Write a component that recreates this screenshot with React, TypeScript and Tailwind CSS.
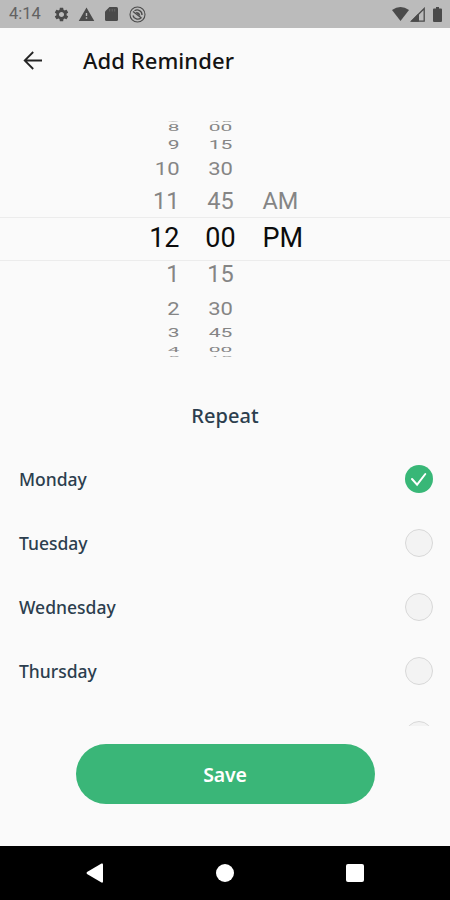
import { useState } from 'react';
import { MdSettings, MdWarning } from 'react-icons/md';

const DAYS = ['Monday', 'Tuesday', 'Wednesday', 'Thursday'];

// One entry per wheel slot, from the top edge to the bottom edge
const SLOTS = [
  { row: 'h-0', text: 'text-[21px] scale-y-[0.08] text-[#a0a0a0]' },
  { row: 'h-[14px]', text: 'text-[21px] scale-y-[0.42] text-[#858585]' },
  { row: 'h-[18px]', text: 'text-[21px] scale-y-[0.65] text-[#858585]' },
  { row: 'h-[31px]', text: 'text-[22px] scale-y-[0.86] text-[#858585]' },
  { row: 'h-9', text: 'text-[23.5px] text-[#858585]' },
  { row: 'h-[36px]', text: 'text-[27px] text-[#0c0c0c]' },
  { row: 'h-[38px]', text: 'text-[23.5px] text-[#858585]' },
  { row: 'h-[29px]', text: 'text-[22px] scale-y-[0.86] text-[#858585]' },
  { row: 'h-[19px]', text: 'text-[21px] scale-y-[0.65] text-[#858585]' },
  { row: 'h-[14px]', text: 'text-[21px] scale-y-[0.36] text-[#858585]' },
  { row: 'h-0', text: 'text-[21px] scale-y-[0.08] text-[#a0a0a0]' },
];

const HOURS = ['7', '8', '9', '10', '11', '12', '1', '2', '3', '4', '5'];
const MINUTES = ['45', '00', '15', '30', '45', '00', '15', '30', '45', '00', '15'];
const PERIODS = ['', '', '', '', 'AM', 'PM', '', '', '', '', ''];

function Wheel({ items, className }: { items: string[]; className: string }) {
  return (
    <div className={`flex flex-col font-['Roboto',sans-serif] ${className}`}>
      {items.map((item, i) => (
        <div key={i} className={`flex items-center ${SLOTS[i].row}`}>
          <span className={`block leading-none ${SLOTS[i].text}`}>{item}</span>
        </div>
      ))}
    </div>
  );
}

function StatusBar() {
  return (
    <div className="flex h-7 items-center bg-[#bbbbbb] pl-[9px] pr-2 text-[#4a4a4a]">
      <span className="w-11 pt-px font-['Roboto',sans-serif] text-[16.5px] leading-none text-[#626262]">4:14</span>
      <MdSettings className="h-[17px] w-[17px]" />
      <MdWarning className="ml-2 h-[17px] w-[17px]" />
      <svg viewBox="0 0 13 14" className="ml-[10px] h-[14px] w-[13px]" fill="currentColor">
        <path d="M4.5 0H11.5Q13 0 13 1.5V12.5Q13 14 11.5 14H1.5Q0 14 0 12.5V4.5Z" />
        <path d="M4.7 2v2.5M7.2 2v2.5M9.7 2v2.5" stroke="#666" strokeWidth="1" />
      </svg>
      <svg viewBox="0 0 17 17" className="ml-[11px] h-[17px] w-[17px]" fill="none" stroke="currentColor">
        <circle cx="8.5" cy="8.5" r="7.5" strokeWidth="1.1" />
        <path d="M4 9.5A4.8 4.8 0 0 0 12 11.8M5.5 4.8A4.8 4.8 0 0 1 13 9" strokeWidth="1.3" />
        <path d="M4 5.5L12.5 12" strokeWidth="1.3" />
        <path d="M7 6.3Q10.5 6 11 9.5L8.5 8Z" fill="currentColor" strokeWidth="0.6" />
      </svg>
      <svg viewBox="0 0 17 14" className="ml-auto h-[14px] w-[17px]" fill="currentColor">
        <path d="M0 3Q8.5-3 17 3L8.5 14Z" />
      </svg>
      <svg viewBox="0 0 15 15" className="ml-[1px] h-[15px] w-[15px]" fill="none" stroke="currentColor">
        <path d="M1.5 14.2H14.2V1.5Z" strokeWidth="1.3" />
        <path d="M1.5 14.2H8.5V7Z" fill="currentColor" strokeWidth="1" />
      </svg>
      <svg viewBox="0 0 9 15" className="ml-2 h-[15px] w-[9px]" fill="currentColor">
        <path d="M3 0H6V1.5H8Q9 1.5 9 2.5V14Q9 15 8 15H1Q0 15 0 14V2.5Q0 1.5 1 1.5H3Z" />
      </svg>
    </div>
  );
}

function DayToggle({ checked }: { checked: boolean }) {
  if (checked) {
    return (
      <span className="flex h-7 w-7 items-center justify-center rounded-full bg-[#38b777]">
        <svg viewBox="0 0 28 28" className="h-7 w-7" fill="none" stroke="white" strokeWidth="2" strokeLinecap="round">
          <path d="M7 14L12.1 19.7L20.3 9" />
        </svg>
      </span>
    );
  }
  return <span className="h-7 w-7 rounded-full border border-[#d8d8d8] bg-[#f3f3f3]" />;
}

export default function App() {
  const [selected, setSelected] = useState<string[]>(['Monday']);

  const toggleDay = (day: string) => {
    setSelected(selected.includes(day) ? selected.filter((d) => d !== day) : [...selected, day]);
  };

  return (
    <div className="flex h-[900px] w-[450px] flex-col overflow-hidden bg-[#fafafa] font-['Noto_Sans',sans-serif]">
      <StatusBar />

      <header className="flex h-[65px] items-center pl-[23px]">
        <button aria-label="Back">
          <svg viewBox="0 0 20 20" className="h-5 w-5" fill="none" stroke="#242424" strokeWidth="1.8">
            <path d="M19 9.5H2M10.2 1L1.7 9.5L10.2 18" />
          </svg>
        </button>
        <h1 className="ml-10 text-[22px] font-medium tracking-[0.08px] text-[#141414]">Add Reminder</h1>
      </header>

      <section className="relative mt-[28px] h-[235px] shrink-0">
        <div className="absolute inset-x-0 top-[96px] h-[44px] border-y border-[#ececec]" />
        <div className="relative flex">
          <Wheel items={HOURS} className="w-[179.5px] items-end" />
          <Wheel items={MINUTES} className="w-[82px] items-center" />
          <Wheel items={PERIODS} className="items-start pl-px" />
        </div>
      </section>

      <h2 className="mt-[46px] text-center text-[20px] font-medium leading-7 tracking-[0.1px] text-[#2c3e4e]">Repeat</h2>

      <div className="mt-[17px] h-[279px] shrink-0 overflow-hidden">
        {DAYS.map((day) => (
          <div key={day} className="flex h-16 items-center justify-between pl-[19px] pr-[17.5px]" onClick={() => toggleDay(day)}>
            <span className="text-[17.5px] font-medium text-[#2c3e4e]">{day}</span>
            <DayToggle checked={selected.includes(day)} />
          </div>
        ))}
        <div className="flex h-16 items-center justify-end pr-[17.5px]">
          <DayToggle checked={false} />
        </div>
      </div>

      <button className="mx-auto mt-[18px] h-[60px] w-[299px] shrink-0 rounded-full bg-[#3ab678] pt-px text-[19.5px] font-semibold tracking-[-0.2px] text-white">
        Save
      </button>

      <nav className="mt-auto flex h-[54px] shrink-0 items-center justify-between bg-black pl-[86px] pr-[86px]">
        <svg viewBox="0 0 17 20" className="h-5 w-[17px]" fill="white">
          <path d="M1 9Q0 10 1 11L15.5 19.5Q17 20 17 18.5V1.5Q17 0 15.5.5Z" />
        </svg>
        <span className="h-[18px] w-[18px] rounded-full bg-white" />
        <span className="h-[18px] w-[18px] rounded-[2px] bg-white" />
      </nav>
    </div>
  );
}
